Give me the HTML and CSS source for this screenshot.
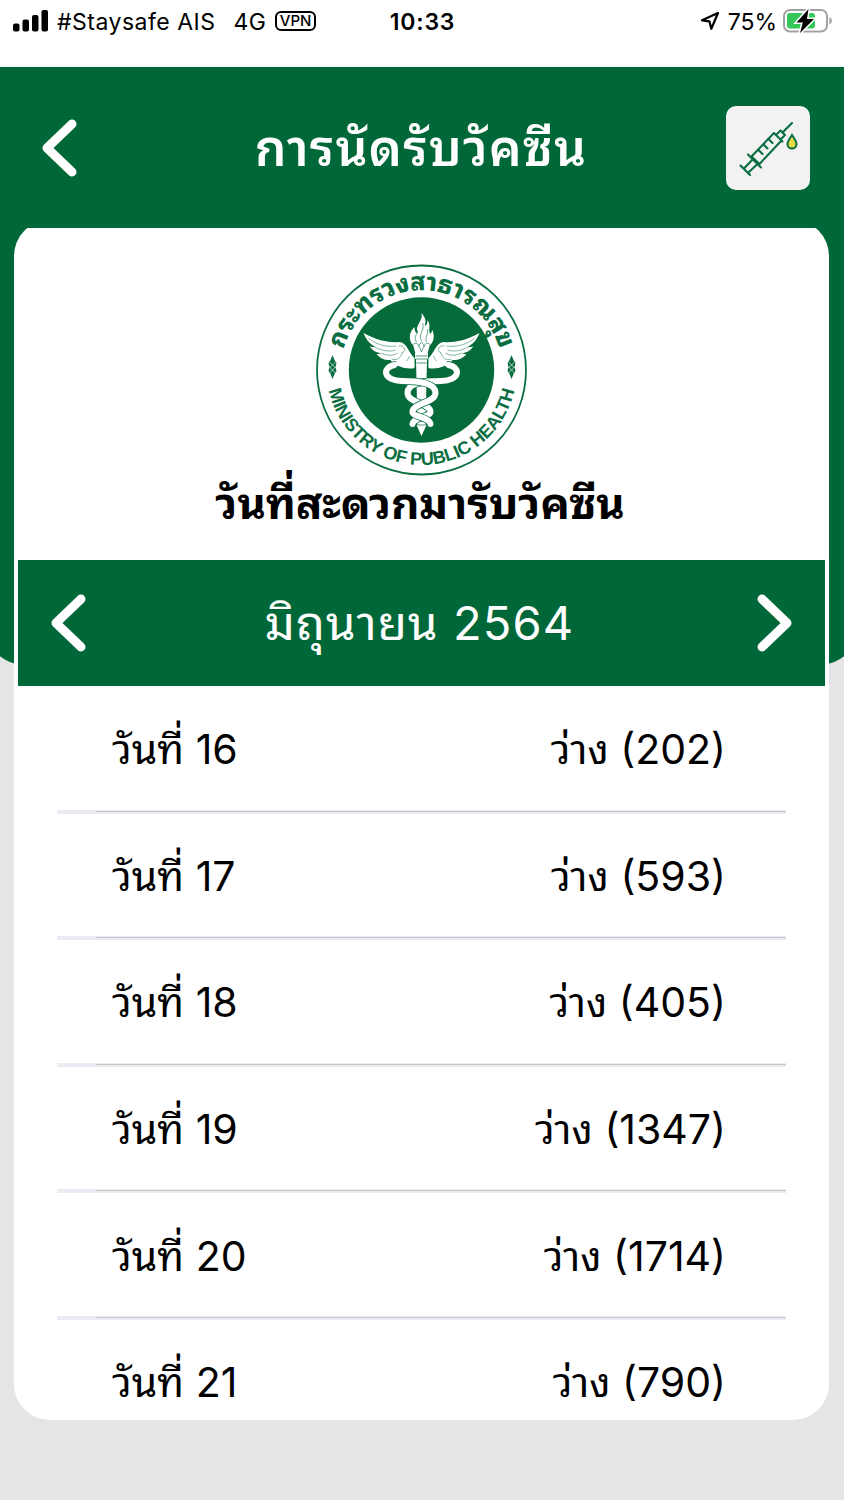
FILE: index.html
```html
<!DOCTYPE html>
<html lang="th">
<head>
  <meta charset="UTF-8">
  <meta name="viewport" content="width=device-width, initial-scale=1.0">
  <title>การนัดรับวัคซีน</title>
  <link rel="stylesheet" href="styles.css">
</head>
<body>
  <div class="status">
    <div class="status-left">
      <svg class="signal" width="36" height="22" viewBox="0 0 36 22">
        <rect x="0" y="13.5" width="6.5" height="8" rx="2"/>
        <rect x="9.5" y="9.5" width="6.5" height="12" rx="2"/>
        <rect x="19" y="5" width="6.5" height="16.5" rx="2"/>
        <rect x="28.5" y="0" width="6.5" height="21.5" rx="2"/>
      </svg>
      <span class="carrier">#Staysafe AIS</span>
      <span class="network">4G</span>
      <span class="vpn">VPN</span>
    </div>
    <span class="time">10:33</span>
    <div class="status-right">
      <svg width="20" height="20" viewBox="0 0 20 20">
        <path d="M18 2 L2 9.3 L9.5 10.4 L11.3 17.8 Z" fill="none" stroke="#000" stroke-width="2.2" stroke-linejoin="round"/>
      </svg>
      <span class="percent">75%</span>
      <svg width="49" height="24" viewBox="0 0 49 24">
        <rect x="1" y="1" width="43" height="21.5" rx="6" fill="#fff" stroke="#a3a3a3" stroke-width="2"/>
        <path d="M46.3 8 Q49 9 49 11.8 Q49 14.5 46.3 15.5 Z" fill="#a3a3a3"/>
        <rect x="4" y="4" width="28" height="15.5" rx="3" fill="#34c759"/>
        <path d="M25.5 0 L13.5 13.5 H19.8 L17 24 L31 10 H24 Z" fill="#000" stroke="#fff" stroke-width="3" paint-order="stroke"/>
      </svg>
    </div>
  </div>

  <div class="screen">
    <div class="backdrop"></div>

    <header>
      <button class="arrow">
        <svg width="36" height="58" viewBox="0 0 36 58"><path d="M31 5 L6 29 L31 53"/></svg>
      </button>
      <h1>การนัดรับวัคซีน</h1>
      <button class="syringe">
        <svg width="84" height="84" viewBox="0 0 84 84">
          <g fill="none" stroke="#0a6e42" stroke-width="2.1" stroke-linecap="round" stroke-linejoin="round">
            <path d="M66 17 L56.5 26.5"/>
            <path d="M54.5 24.5 L59 29 M51 28 L54.5 24.5 L59 29 L55.5 32.5"/>
            <path d="M48 27 L56.5 35.5 M48 27 L25.5 50.5 L33.5 58 L55.5 34.5"/>
            <path d="M22 48.5 L35 61.5"/>
            <path d="M27 53 L18.5 62 M31.5 58 L23 66"/>
            <path d="M14.5 59.5 L24 69"/>
            <path d="M42.5 33 L46.5 37 M37.5 38.5 L41.5 42.5 M32.5 44 L36.5 48"/>
          </g>
          <path d="M66 29 C63.8 32.5 61.5 35.5 61.5 38 A4.5 4.5 0 0 0 70.5 38 C70.5 35.5 68.2 32.5 66 29 Z" fill="#e6dc4a" stroke="#0a6e42" stroke-width="2"/>
        </svg>
      </button>
    </header>

    <main>
      <section class="card">
        <svg class="emblem" width="212" height="212" viewBox="-105.5 -106 212 212">
          <defs>
            <path id="arc-top" d="M-80 14 A81 81 0 1 1 80 14"/>
            <path id="arc-bottom" d="M-95 0 A95 95 0 0 0 95 0"/>
            <g id="half">
              <!-- wing -->
              <path d="M-7 -12 C-13 -17 -14 -27 -22 -28 C-30 -27 -44 -29 -58 -37 C-55 -29 -50 -25 -46 -23 C-49 -23 -51 -23 -52 -24 C-48 -18 -44 -17 -40 -17 C-42 -16 -44 -16 -45 -16 C-40 -10 -35 -10 -31 -10 C-28 -4 -14 0 -7 -2 Z" fill="#fff"/>
              <path d="M-53 -32 C-44 -24 -33 -23 -25 -24 M-47 -23 C-39 -19 -32 -18 -26 -20 M-40 -17 C-34 -14 -28 -14 -24 -17 M-30 -11 C-24 -9 -21 -12 -19 -18 M-23 -24 C-17 -25 -15 -20 -19 -17 M-24 -7 C-17 -5 -14 -9 -12 -14" fill="none" stroke="#0a6e42" stroke-width=".5"/>
            </g>
            <g id="rosette">
              <path d="M0 -12 L2 -7 L4 -4 L3 0 L4 4 L2 7 L0 12 L-2 7 L-4 4 L-3 0 L-4 -4 L-2 -7 Z" fill="#0a6e42"/>
              <path d="M-3 -5 L3 1 M-3 0 L3 6 M3 -5 L-3 1 M3 0 L-3 6" stroke="#fff" stroke-width=".6"/>
            </g>
          </defs>
          <circle r="104.5" fill="#fff" stroke="#0a6e42" stroke-width="1.8"/>
          <circle r="72.7" fill="#056b3a"/>
          <text class="emblem-th"><textPath href="#arc-top" startOffset="50%" text-anchor="middle" textLength="210">กระทรวงสาธารณสุข</textPath></text>
          <text class="emblem-en"><textPath href="#arc-bottom" startOffset="50%" text-anchor="middle" textLength="257">MINISTRY OF PUBLIC HEALTH</textPath></text>
          <use href="#rosette" x="-89" y="-3"/>
          <use href="#rosette" x="90" y="-3"/>
          <use href="#half"/>
          <use href="#half" transform="scale(-1 1)"/>
          <!-- torch -->
          <path d="M-8 -24 C-14 -31 -12 -38 -7 -43 C-7 -39 -6 -37 -4 -37 C-7 -45 2 -49 0 -57 C4 -52 5 -49 3 -44 C6 -45 6 -48 6 -50 C10 -45 6 -39 9 -36 L11 -40 C13 -34 13 -29 8 -24 L6 -16 H-6 Z" fill="#fff"/>
          <path d="M-5 -28 C-9 -34 -3 -36 -4 -40 M0 -29 C-4 -36 4 -40 1 -47 M5 -28 C3 -33 7 -35 6 -41 M-9 -25 Q-4 -31 0 -18 Q4 -31 9 -25 M-3 -23 Q0 -32 3 -23" fill="none" stroke="#0a6e42" stroke-width=".6"/>
          <path d="M-6.5 -17 H6.5 V-11 H5.5 L4 55 H5 L0 66 L-5 55 H-4 L-5.5 -11 H-6.5 Z" fill="#fff"/>
          <path d="M-6 -14 H6 M-6 -11 H6 M-5 -7 H5 M-4 55 H4" stroke="#0a6e42" stroke-width=".7"/>
          <!-- snakes -->
          <g fill="none" stroke-linecap="round">
            <path class="snake-edge" d="M27 -5 C41 -2 37 11 20 11 C2 11 -14 13 -14 23 C-14 33 9 33 9 42 C9 47 -8 47 -9 54"/>
            <path class="snake" d="M27 -5 C41 -2 37 11 20 11 C2 11 -14 13 -14 23 C-14 33 9 33 9 42 C9 47 -8 47 -9 54"/>
            <path class="snake-edge" d="M-27 -5 C-41 -2 -37 11 -20 11 C-2 11 14 13 14 23 C14 33 -9 33 -9 42 C-9 47 8 47 9 54"/>
            <path class="snake" d="M-27 -5 C-41 -2 -37 11 -20 11 C-2 11 14 13 14 23 C14 33 -9 33 -9 42 C-9 47 8 47 9 54"/>
            <path class="snake thin" d="M-27 -5 Q-18 -10 -9 -5 M27 -5 Q18 -10 9 -5"/>
          </g>
        </svg>
        <h2>วันที่สะดวกมารับวัคซีน</h2>

        <div class="month">
          <button class="arrow">
            <svg width="36" height="58" viewBox="0 0 36 58"><path d="M31 5 L6 29 L31 53"/></svg>
          </button>
          <span class="month-name">มิถุนายน <span class="year">2564</span></span>
          <button class="arrow">
            <svg width="36" height="58" viewBox="0 0 36 58"><path d="M5 5 L30 29 L5 53"/></svg>
          </button>
        </div>

        <ul class="days">
          <li><span>วันที่ <b>16</b></span><span>ว่าง <b>(202)</b></span></li>
          <li><span>วันที่ <b>17</b></span><span>ว่าง <b>(593)</b></span></li>
          <li><span>วันที่ <b>18</b></span><span>ว่าง <b>(405)</b></span></li>
          <li><span>วันที่ <b>19</b></span><span>ว่าง <b>(1347)</b></span></li>
          <li><span>วันที่ <b>20</b></span><span>ว่าง <b>(1714)</b></span></li>
          <li><span>วันที่ <b>21</b></span><span>ว่าง <b>(790)</b></span></li>
        </ul>
      </section>
    </main>
  </div>
</body>
</html>
```
FILE: styles.css
```css
* {
  box-sizing: border-box;
}
html, body {
  height: 100%;
  margin: 0;
}
body {
  display: flex;
  flex-direction: column;
  overflow: hidden;
  background: #fff;
  color: #000;
  font-family: Inter, Thonburi, "Noto Sans Thai Looped", Loma, Garuda, Waree, sans-serif;
}
button {
  padding: 0;
  border: 0;
  background: none;
}
svg {
  display: block;
}

.status {
  display: grid;
  grid-template-columns: 1fr auto 1fr;
  flex: none;
  height: 67px;
  padding: 7px 12px 0 13px;
  font-size: 23px;
  line-height: 28px;
  align-items: start;
}
.status-left, .status-right {
  display: flex;
  align-items: center;
  height: 28px;
}
.status-right {
  justify-content: flex-end;
}
.signal {
  margin-right: 8px;
}
.carrier {
  padding-top: 2px;
  letter-spacing: 0.5px;
}
.network {
  margin: 0 9px 0 18px;
  padding-top: 2px;
  letter-spacing: 0.3px;
}
.vpn {
  width: 41px;
  height: 20px;
  margin-bottom: 1px;
  border: 2px solid #000;
  border-radius: 6px;
  font-size: 15px;
  font-weight: 500;
  line-height: 16px;
  text-align: center;
}
.time {
  padding-top: 1px;
  font-weight: 600;
  letter-spacing: 0.8px;
}
.percent {
  margin: 0 6px 0 8px;
  padding-top: 2px;
}

.screen {
  position: relative;
  display: flex;
  flex-direction: column;
  flex: 1;
  background: #e5e5e7;
  overflow: hidden;
}
.backdrop {
  position: absolute;
  top: 0;
  left: -15px;
  right: -15px;
  height: 598px;
  border-radius: 0 0 40px 40px;
  background: #006838;
}

header {
  position: relative;
  display: flex;
  justify-content: space-between;
  align-items: center;
  flex: none;
  height: 161px;
  padding: 0 34px 0 41px;
}
h1 {
  margin: 0 0 0 39px;
  color: #fff;
  font-size: 50px;
  font-weight: 600;
  letter-spacing: 1.2px;
  line-height: 60px;
}
.arrow path {
  fill: none;
  stroke: #fff;
  stroke-width: 9;
  stroke-linecap: round;
  stroke-linejoin: round;
}
.syringe {
  width: 84px;
  height: 84px;
  border-radius: 10px;
  background: #f2f2f2;
}

/* the top of the card is cut off by the scroll area */
main {
  position: relative;
  flex: 1;
  padding: 0 15px 0 14px;
  overflow: hidden;
}
.card {
  display: flex;
  flex-direction: column;
  align-items: center;
  height: 1200px;
  margin-top: -8px;
  padding: 44px 4px 0;
  border-radius: 36px;
  background: #fff;
  overflow: hidden;
}
.emblem {
  flex: none;
}
.emblem-th {
  fill: #0a6e42;
  font-size: 25px;
  font-weight: 800;
}
.emblem-en {
  fill: #0a6e42;
  font-family: "Liberation Sans", sans-serif;
  font-size: 18px;
  font-weight: 700;
}
.snake {
  stroke: #fff;
  stroke-width: 6;
}
.snake-edge {
  stroke: #0a6e42;
  stroke-width: 7.5;
}
.thin {
  stroke-width: 4;
}
h2 {
  flex: none;
  height: 84px;
  margin: 0 3px 0 0;
  font-size: 44px;
  font-weight: 700;
  letter-spacing: -0.2px;
  line-height: 55px;
}

.month {
  display: flex;
  justify-content: space-between;
  align-items: center;
  flex: none;
  width: 100%;
  height: 126px;
  padding: 0 32px;
  background: #006838;
  color: #fff;
  font-size: 48px;
}
.month-name {
  margin-right: 4px;
  padding-bottom: 9px;
  letter-spacing: 0.8px;
}
.year {
  font-size: 47px;
  letter-spacing: 1.2px;
}

.days {
  width: 100%;
  margin: 0;
  padding: 1px 39px 0;
  list-style: none;
  font-size: 41px;
}
.days li {
  display: flex;
  justify-content: space-between;
  align-items: center;
  height: 126.6px;
  padding: 0 60px 9px 55px;
  background:
    linear-gradient(#c8c7cc, #c8c7cc) 39px calc(100% - 2px) / 100% 1px no-repeat,
    linear-gradient(#ebebf1, #ebebf1) 0 100% / 100% 4px no-repeat;
}
.days b {
  font-weight: 400;
}
```
